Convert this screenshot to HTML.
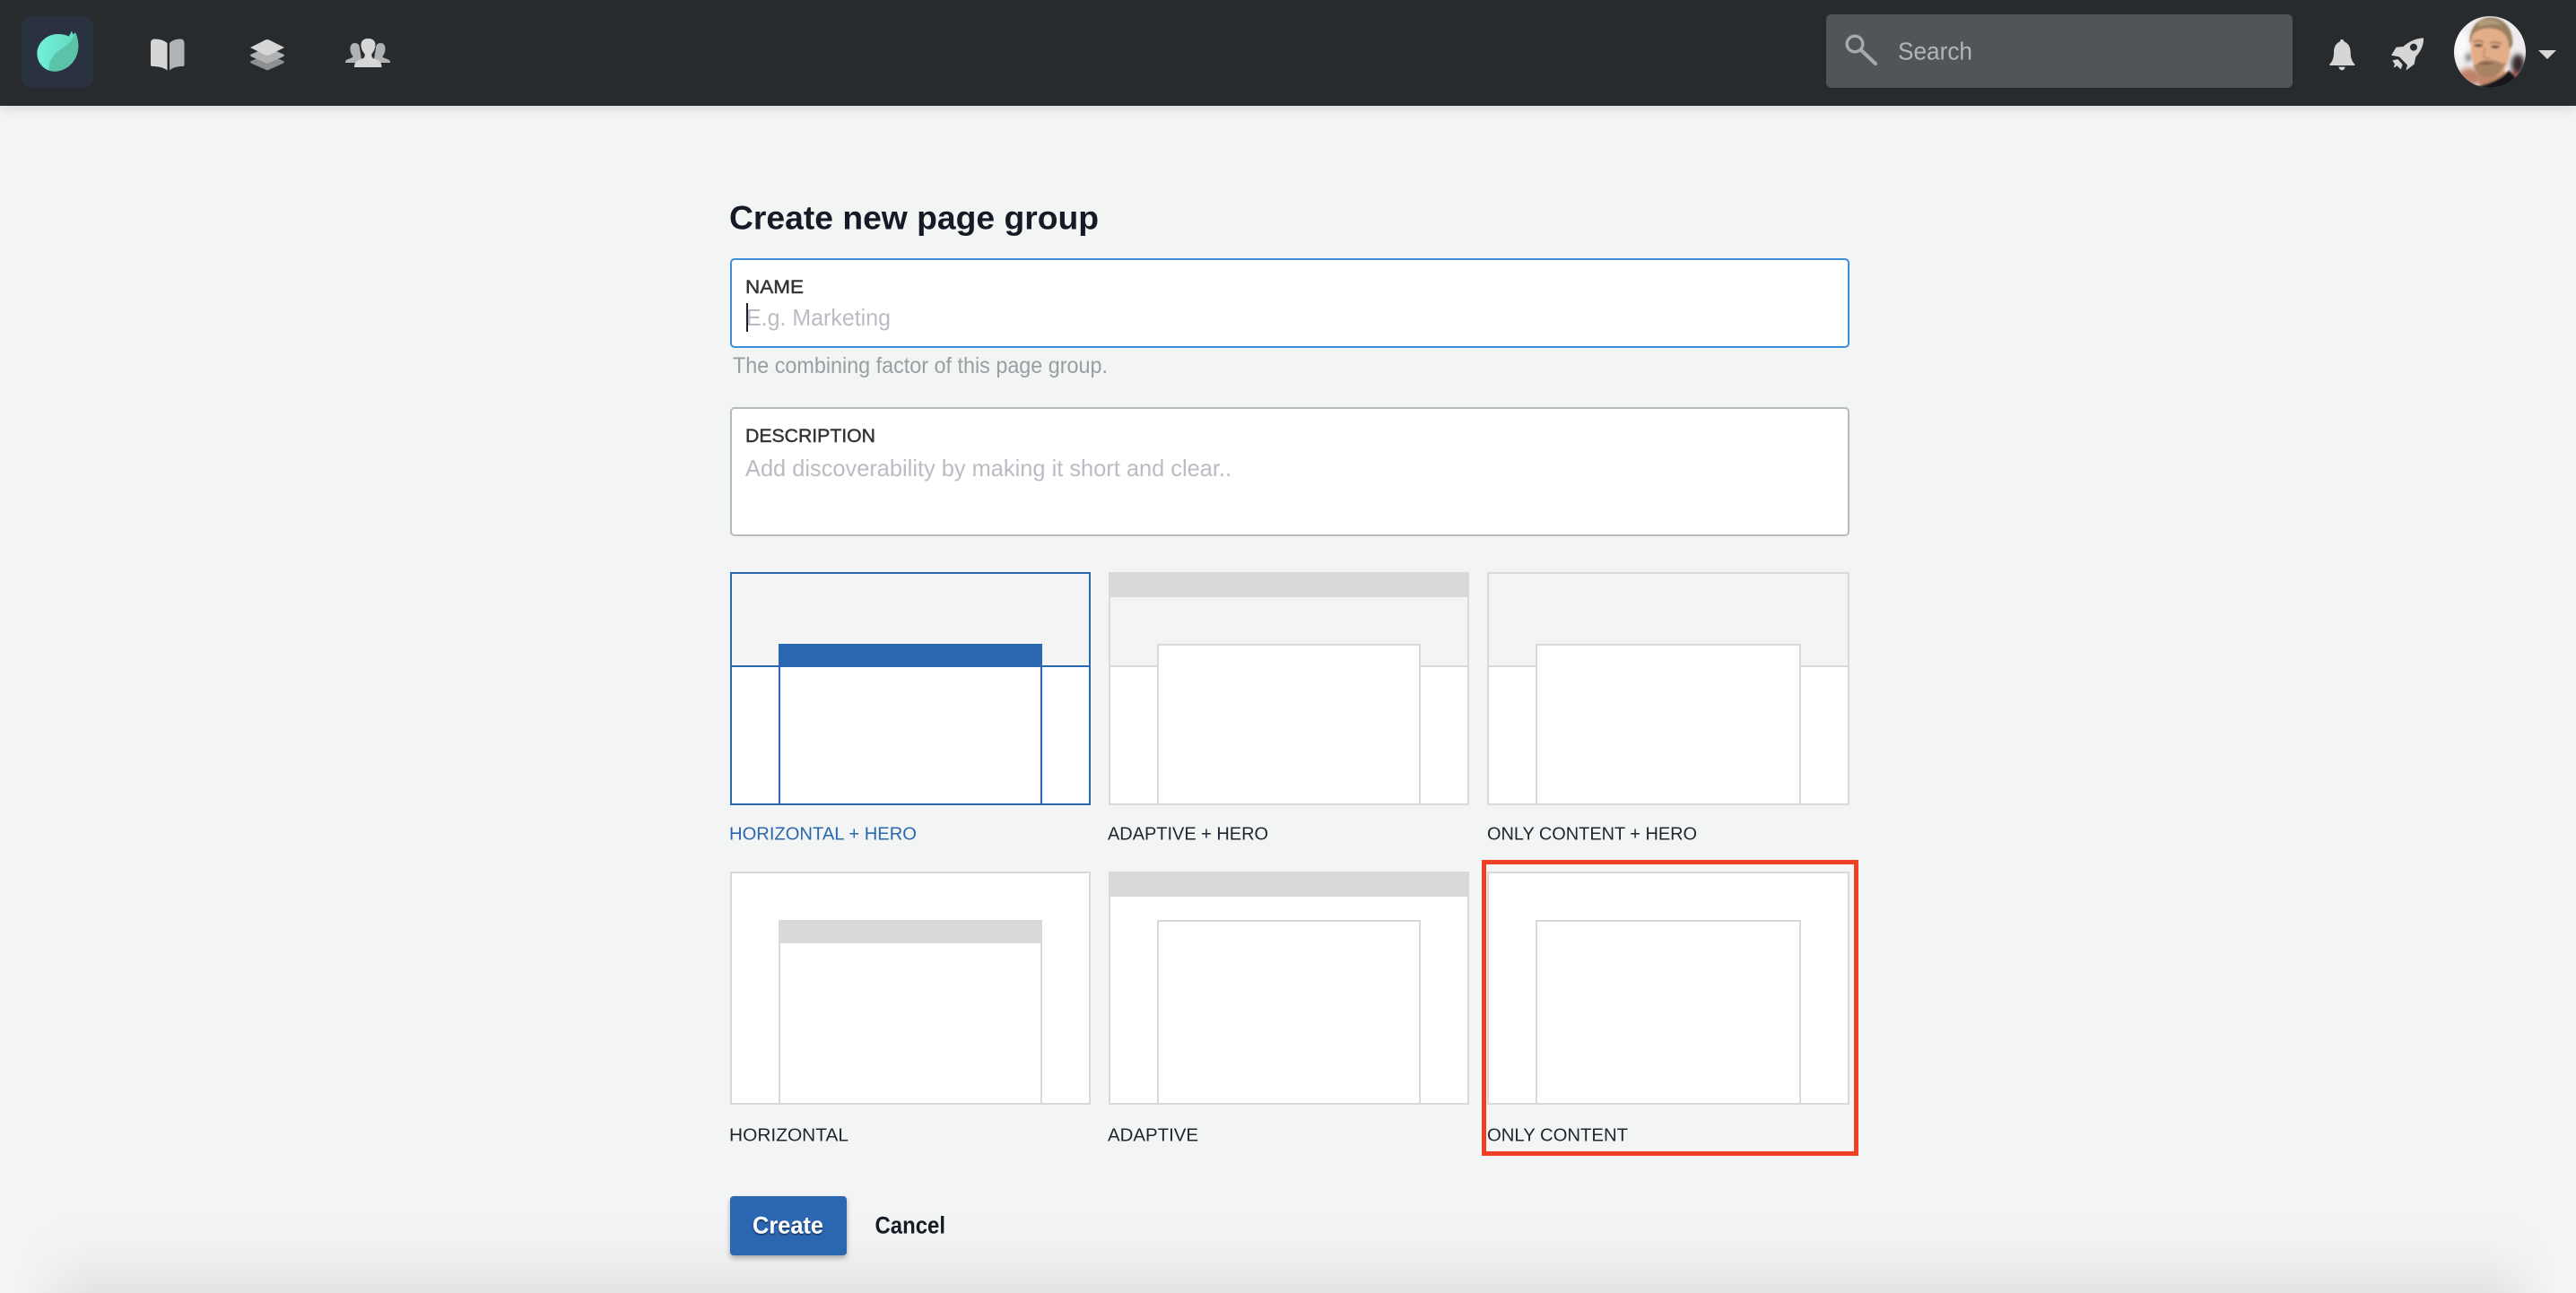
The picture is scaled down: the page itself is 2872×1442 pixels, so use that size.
<!DOCTYPE html>
<html lang="en">
<head>
<meta charset="utf-8">
<title>Create new page group</title>
<style>
html,body{margin:0;padding:0;width:2872px;height:1442px;overflow:hidden;background:#f3f5f4;font-family:"Liberation Sans",sans-serif}
.wrap{position:relative;width:2872px;height:1442px;overflow:hidden;background:#f3f5f4}
.hd{position:absolute;left:0;top:0;width:2872px;height:118px;background:#272b2e;box-shadow:0 3px 12px rgba(0,0,0,.12)}
.bs{position:absolute;left:0;width:2872px;top:1352px;height:90px;background:linear-gradient(to bottom,rgba(0,0,0,0) 0,rgba(0,0,0,.004) 12px,rgba(0,0,0,.012) 38px,rgba(0,0,0,.045) 71px,rgba(0,0,0,.066) 90px);-webkit-mask-image:linear-gradient(to right,transparent 18px,#000 105px,#000 2770px,transparent 2850px);mask-image:linear-gradient(to right,transparent 18px,#000 105px,#000 2770px,transparent 2850px)}
svg.m{position:absolute;left:0;top:0}
text{font-family:"Liberation Sans",sans-serif}
</style>
</head>
<body>
<div class="wrap">
<div class="bs"></div>
<div class="hd"></div>
<svg class="m" width="2872" height="1442" viewBox="0 0 2872 1442" xmlns="http://www.w3.org/2000/svg">
<defs>
<linearGradient id="lg" x1="0" y1="0.4" x2="1" y2="0.6"><stop offset="0" stop-color="#74f0da"/><stop offset="1" stop-color="#5fd8bb"/></linearGradient>
<clipPath id="av"><circle cx="168" cy="144" r="120"/></clipPath>
<filter id="bl" x="-10%" y="-10%" width="120%" height="120%"><feGaussianBlur stdDeviation="3"/></filter>
<filter id="bls" x="-10%" y="-10%" width="120%" height="120%"><feGaussianBlur stdDeviation="3"/></filter>
<filter id="bl2" x="-30%" y="-30%" width="160%" height="160%"><feGaussianBlur stdDeviation="9"/></filter>
<filter id="ts" x="-10%" y="-20%" width="120%" height="150%"><feDropShadow dx="0" dy="1.5" stdDeviation="0.8" flood-color="#000" flood-opacity=".55"/></filter>
</defs>

<!-- logo -->
<rect x="24" y="18" width="80" height="80" rx="12" fill="#2a3140"/>
<g transform="translate(24 18) scale(.3333)">
<path d="M158 68L168 50L172 61L180 55C186 65 190 82 190 100C190 150 150 185 110 185C75 185 52 155 52 125C52 90 85 60 120 60C135 60 148 62 158 68Z" fill="url(#lg)"/>
<path d="M180 55C186 65 190 82 190 100C190 150 150 185 110 185C102 185 96 183 92 180C90 150 108 125 135 108C155 96 172 80 180 55Z" fill="#5bc4a8"/>
</g>

<!-- book -->
<path d="M168 48C168 45 170 43.5 172 43.5C178 43.5 183 45 186.500 48V78.500C182 75 176 74 170 74C168.500 74 168 73 168 72Z" fill="#d6d6d6"/>
<path d="M205.500 48C205.500 45 203.500 43.500 201.500 43.500C196 43.500 192 45 189 48V78.500C193 75 198 74 203.500 74C205 74 205.500 73 205.500 72Z" fill="#b1b2b4"/>

<!-- layers -->
<path d="M279 66.500L288 62.500L298 67L308 62.500L317 66.500Q317 68 315 69L298 76.500L281 69Q279 68 279 66.500Z" fill="#8e8f90" transform="translate(0 2)"/>
<path d="M279 61L288 57L298 61.500L308 57L317 61Q317 62.500 315 63.500L298 71L281 63.500Q279 62.500 279 61Z" fill="#b0b1b2"/>
<path d="M279 53L296 44.500Q298 43.700 300 44.500L317 53L300 61.500Q298 62.300 296 61.500Z" fill="#d6d6d6"/>

<!-- users -->
<path d="M385 69C385 66 391 65.500 393.500 63.500C393 61.500 391 60 390.500 56C390 51 392 48 395.500 48C399 48 401 50 401 54L403 66L396 70L385 70Z" fill="#b0b1b2"/>
<path d="M435 69C435 66 429 65.500 426.500 63.500C427 61.500 429 60 429.500 56C430 51 428 48 424.500 48C421 48 419 50 419 54L417 66L424 70L435 70Z" fill="#b0b1b2"/>
<path d="M395 75C395 69 398 67 405 65C406.500 64 407 62 406.500 60C404 57 402.500 54 402.500 50C402.500 46 405 43 410.500 43C416 43 418.500 46 418.500 50C418.500 54 417 57 414.500 60C414 62 414.500 64 416 65C423 67 425.500 69 425.500 75Z" fill="#d6d6d6"/>

<!-- search -->
<rect x="2036" y="16" width="520" height="82" rx="6" fill="#525558"/>
<circle cx="2068" cy="49" r="8.800" fill="none" stroke="#a8a9ab" stroke-width="3.400"/>
<path d="M2075 56L2091 71" stroke="#a8a9ab" stroke-width="4" stroke-linecap="round"/>
<text x="2116" y="66.500" font-size="28" fill="#b3b4b5" textLength="83" lengthAdjust="spacingAndGlyphs">Search</text>

<!-- bell -->
<g transform="translate(2580 30) scale(.3333)" fill="#d6d6d6">
<path d="M93 42C97 42 100 45 100 49C114 54 122 67 122 85C122 102 126 115 136 125V129H52V125C62 115 66 102 66 85C66 67 73 54 87 49C87 45 89 42 93 42Z"/>
<path d="M82 134H104C102 141 98 145 93 145C88 145 84 141 82 134Z"/>
<!-- rocket -->
<path fill-rule="evenodd" d="M366 37C340 38 315 50 298 66L275 68L258 95L285 100L312 128L307 146L335 125L340 100C355 85 368 60 366 37ZM333 56A12 12 0 1 1 332.900 56Z"/>
<path d="M262 112L280 108L296 126L290 142L278 130L266 137L270 125Z"/>
</g>

<!-- avatar -->
<g transform="translate(2720 10) scale(.3333)" clip-path="url(#av)">
<rect x="40" y="20" width="260" height="250" fill="#eeecef"/>
<g filter="url(#bl2)">
<ellipse cx="262" cy="185" rx="22" ry="34" fill="#35282a"/>
<ellipse cx="240" cy="232" rx="30" ry="18" fill="#a8503f"/>
<ellipse cx="95" cy="160" rx="10" ry="14" fill="#4a3c3e"/>
<ellipse cx="100" cy="228" rx="40" ry="30" fill="#c08268"/>
<ellipse cx="72" cy="120" rx="22" ry="50" fill="#fbfafb"/>
</g>
<g filter="url(#bl)">
<path d="M125 200H215L225 240L170 262L130 250Z" fill="#c08868"/>
<path d="M122 258C160 254 206 234 232 206L262 240L240 285H118Z" fill="#18181a"/>
<path d="M108 90C100 130 105 180 125 210C140 228 185 236 208 215C232 190 240 140 236 90C215 55 135 50 108 90Z" fill="#e4ad8a"/>
<path d="M112 186C122 222 150 232 170 230C193 228 212 208 220 176C212 188 205 178 190 174C170 168 150 168 135 176C125 182 118 192 112 186Z" fill="#a98463"/>
<path d="M100 112C100 60 130 28 170 28C210 28 243 60 244 110C244 125 238 135 232 130C232 108 224 86 205 74C180 60 135 60 112 84C106 94 106 106 103 114Z" fill="#98805f"/>
<path d="M130 42C160 30 190 35 212 55C190 48 160 50 130 60Z" fill="#b39c7c"/>
<ellipse cx="130" cy="122" rx="15" ry="5" fill="#5c4a40"/>
<ellipse cx="186" cy="127" rx="15" ry="5" fill="#5c4a40"/>
<path d="M112 110Q130 102 148 112" stroke="#8a6c53" stroke-width="5" fill="none"/>
<path d="M168 114Q188 108 206 118" stroke="#8a6c53" stroke-width="5" fill="none"/>
<path d="M152 130L146 160Q155 166 168 162" stroke="#c68b6b" stroke-width="6" fill="none"/>
<path d="M128 182Q155 174 185 182Q155 190 128 182Z" fill="#7e4f3f"/>
</g>
</g>
<path d="M2830 56H2850L2840 66Z" fill="#d8d8d8"/>

<!-- heading -->
<text x="813" y="255.500" font-size="37" font-weight="700" fill="#141a26" textLength="412" lengthAdjust="spacingAndGlyphs">Create new page group</text>

<!-- name -->
<rect x="815" y="289" width="1246" height="98" rx="4" fill="#fff" stroke="#3b8fdc" stroke-width="2"/>
<text x="831" y="327" font-size="21" fill="#333437" stroke="#333437" stroke-width=".45" textLength="65" lengthAdjust="spacingAndGlyphs">NAME</text>
<text x="832" y="363" font-size="26" fill="#b9bdc3" textLength="161" lengthAdjust="spacingAndGlyphs">E.g. Marketing</text>
<rect x="832" y="338" width="2" height="32" fill="#1a1f2b"/>
<text x="817" y="416" font-size="25" fill="#9a9ea3" textLength="418" lengthAdjust="spacingAndGlyphs">The combining factor of this page group.</text>

<!-- description -->
<rect x="815" y="455" width="1246" height="142" rx="4" fill="#fff" stroke="#b6b9be" stroke-width="2"/>
<text x="831" y="493" font-size="21" fill="#333437" stroke="#333437" stroke-width=".45" textLength="145" lengthAdjust="spacingAndGlyphs">DESCRIPTION</text>
<text x="831" y="531" font-size="26" fill="#b9bdc3" textLength="542" lengthAdjust="spacingAndGlyphs">Add discoverability by making it short and clear..</text>

<!-- row 1 cards -->
<g shape-rendering="crispEdges">
<rect x="815" y="639" width="400" height="258" fill="#fff" stroke="#2b66b1" stroke-width="2"/>
<rect x="816" y="640" width="398" height="102" fill="#f4f4f4"/>
<rect x="816" y="742" width="398" height="2" fill="#2b66b1"/>
<rect x="868" y="718" width="294" height="26" fill="#2b66b1"/>
<rect x="870" y="744" width="290" height="152" fill="#fff"/>
<rect x="868" y="744" width="2" height="153" fill="#2b66b1"/>
<rect x="1160" y="744" width="2" height="153" fill="#2b66b1"/>

<rect x="1237" y="639" width="400" height="258" fill="#fff" stroke="#d9d9d9" stroke-width="2"/>
<rect x="1238" y="640" width="398" height="102" fill="#f4f4f4"/>
<rect x="1238" y="742" width="398" height="2" fill="#d9d9d9"/>
<rect x="1236" y="638" width="402" height="28" fill="#d9d9d9"/>
<rect x="1291" y="719" width="292" height="178" fill="#fff" stroke="#d9d9d9" stroke-width="2"/>

<rect x="1659" y="639" width="402" height="258" fill="#fff" stroke="#d9d9d9" stroke-width="2"/>
<rect x="1660" y="640" width="400" height="102" fill="#f4f4f4"/>
<rect x="1660" y="742" width="400" height="2" fill="#d9d9d9"/>
<rect x="1713" y="719" width="294" height="178" fill="#fff" stroke="#d9d9d9" stroke-width="2"/>

<!-- row 2 cards -->
<rect x="815" y="973" width="400" height="258" fill="#fff" stroke="#d9d9d9" stroke-width="2"/>
<rect x="869" y="1027" width="292" height="204" fill="#fff" stroke="#d9d9d9" stroke-width="2"/>
<rect x="868" y="1026" width="294" height="26" fill="#d9d9d9"/>

<rect x="1237" y="973" width="400" height="258" fill="#fff" stroke="#d9d9d9" stroke-width="2"/>
<rect x="1236" y="972" width="402" height="28" fill="#d9d9d9"/>
<rect x="1291" y="1027" width="292" height="204" fill="#fff" stroke="#d9d9d9" stroke-width="2"/>

<rect x="1659" y="973" width="402" height="258" fill="#fff" stroke="#d9d9d9" stroke-width="2"/>
<rect x="1713" y="1027" width="294" height="204" fill="#fff" stroke="#d9d9d9" stroke-width="2"/>

<!-- red annotation -->
<rect x="1654.500" y="961.500" width="415" height="325" fill="none" stroke="#ef3f24" stroke-width="5"/>
</g>

<!-- labels -->
<text x="813" y="936.500" font-size="20.500" fill="#2b66b1" textLength="209" lengthAdjust="spacingAndGlyphs">HORIZONTAL + HERO</text>
<text x="1235" y="936.500" font-size="20.500" fill="#1f2430" textLength="179" lengthAdjust="spacingAndGlyphs">ADAPTIVE + HERO</text>
<text x="1658" y="936.500" font-size="20.500" fill="#1f2430" textLength="234" lengthAdjust="spacingAndGlyphs">ONLY CONTENT + HERO</text>
<text x="813" y="1272.500" font-size="20.500" fill="#1f2430" textLength="133" lengthAdjust="spacingAndGlyphs">HORIZONTAL</text>
<text x="1235" y="1272.500" font-size="20.500" fill="#1f2430" textLength="101" lengthAdjust="spacingAndGlyphs">ADAPTIVE</text>
<text x="1658" y="1272.500" font-size="20.500" fill="#1f2430" textLength="157" lengthAdjust="spacingAndGlyphs">ONLY CONTENT</text>

<!-- buttons -->
<rect x="814" y="1334" width="130" height="66" rx="4" fill="#000" opacity=".3" transform="translate(0 3)" filter="url(#bls)"/>
<rect x="814" y="1334" width="130" height="66" rx="4" fill="#2b66b1"/>
<text x="839" y="1375.500" font-size="27" font-weight="700" fill="#fff" textLength="79" lengthAdjust="spacingAndGlyphs" filter="url(#ts)">Create</text>
<text x="975.500" y="1375.500" font-size="27" font-weight="700" fill="#141a26" textLength="78.500" lengthAdjust="spacingAndGlyphs">Cancel</text>
</svg>
</div>
</body>
</html>
